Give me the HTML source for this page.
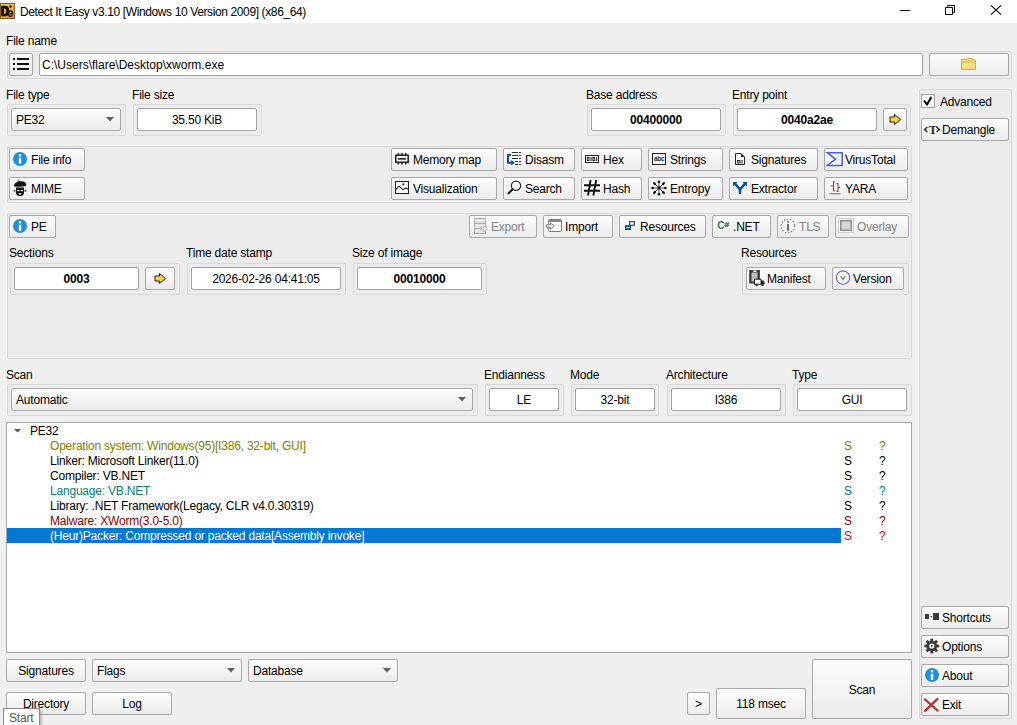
<!DOCTYPE html><html><head><meta charset="utf-8"><style>
*{margin:0;padding:0}
html,body{width:1017px;height:725px;overflow:hidden}
body{position:relative;background:#f0f0f0;font-family:"Liberation Sans",sans-serif;font-size:12px;letter-spacing:-0.2px;color:#000}
.a{position:absolute;box-sizing:border-box}
.t{line-height:14px;white-space:nowrap}
.fr{border:1px solid #d9d9d9;background:#ececec;border-radius:2px}
.btn{border:1px solid #a8a8a8;border-radius:2px;background:linear-gradient(#fdfdfd,#ececec)}
.inp{border:1px solid #a3a3a3;border-radius:2px;background:#fff}
#ic{position:absolute;left:0;top:0;pointer-events:none}
</style></head><body>
<div class="a " style="left:0px;top:0px;width:1017px;height:23px;background:#fff"></div>
<div class="a t" style="left:20px;top:5px;letter-spacing:-0.38px">Detect It Easy v3.10 [Windows 10 Version 2009] (x86_64)</div>
<div class="a t" style="left:6px;top:34px;">File name</div>
<div class="a fr" style="left:7px;top:51px;width:1005px;height:28px;"></div>
<div class="a btn" style="left:9px;top:53px;width:24px;height:23px;"></div>
<div class="a inp" style="left:39px;top:53px;width:884px;height:23px;"></div>
<div class="a t" style="left:42px;top:58px;letter-spacing:0px;">C:\Users\flare\Desktop\xworm.exe</div>
<style>.fn{letter-spacing:0px}</style>
<div class="a btn" style="left:929px;top:53px;width:80px;height:23px;"></div>
<div class="a t" style="left:6px;top:88px;">File type</div>
<div class="a t" style="left:132px;top:88px;">File size</div>
<div class="a t" style="left:586px;top:88px;">Base address</div>
<div class="a t" style="left:732px;top:88px;">Entry point</div>
<div class="a fr" style="left:7px;top:104px;width:119px;height:32px;"></div>
<div class="a btn" style="left:11px;top:108px;width:110px;height:23px;"></div>
<div class="a t" style="left:16px;top:113px;">PE32</div>
<div class="a fr" style="left:133px;top:104px;width:129px;height:32px;"></div>
<div class="a inp" style="left:137px;top:108px;width:120px;height:23px;"></div>
<div class="a t" style="left:137px;width:120px;top:113px;text-align:center;">35.50 KiB</div>
<div class="a fr" style="left:587px;top:104px;width:139px;height:32px;"></div>
<div class="a inp" style="left:591px;top:108px;width:130px;height:23px;"></div>
<div class="a t" style="left:591px;width:130px;top:113px;text-align:center;font-weight:bold;">00400000</div>
<div class="a fr" style="left:733px;top:104px;width:178px;height:32px;"></div>
<div class="a inp" style="left:737px;top:108px;width:140px;height:23px;"></div>
<div class="a t" style="left:737px;width:140px;top:113px;text-align:center;font-weight:bold;">0040a2ae</div>
<div class="a btn" style="left:883px;top:108px;width:24px;height:23px;"></div>
<div class="a fr" style="left:919px;top:89px;width:93px;height:630px;"></div>
<div class="a " style="left:921px;top:94px;width:14px;height:14px;background:#fff;border:1px solid #a0a0a0"></div>
<div class="a t" style="left:940px;top:95px;">Advanced</div>
<div class="a btn" style="left:921px;top:118px;width:88px;height:23px;"></div>
<div class="a t" style="left:942px;top:123px;">Demangle</div>
<div class="a fr" style="left:7px;top:146px;width:905px;height:57px;"></div>
<div class="a btn" style="left:9px;top:148px;width:76px;height:23px;"></div>
<div class="a t" style="left:31px;top:153px;">File info</div>
<div class="a btn" style="left:9px;top:177px;width:76px;height:23px;"></div>
<div class="a t" style="left:31px;top:182px;">MIME</div>
<div class="a btn" style="left:391px;top:148px;width:106px;height:23px;"></div>
<div class="a t" style="left:413px;top:153px;">Memory map</div>
<div class="a btn" style="left:503px;top:148px;width:72px;height:23px;"></div>
<div class="a t" style="left:525px;top:153px;">Disasm</div>
<div class="a btn" style="left:581px;top:148px;width:61px;height:23px;"></div>
<div class="a t" style="left:603px;top:153px;">Hex</div>
<div class="a btn" style="left:648px;top:148px;width:75px;height:23px;"></div>
<div class="a t" style="left:670px;top:153px;">Strings</div>
<div class="a btn" style="left:729px;top:148px;width:89px;height:23px;"></div>
<div class="a t" style="left:751px;top:153px;">Signatures</div>
<div class="a btn" style="left:824px;top:148px;width:84px;height:23px;"></div>
<div class="a t" style="left:845px;top:153px;">VirusTotal</div>
<div class="a btn" style="left:391px;top:177px;width:106px;height:23px;"></div>
<div class="a t" style="left:413px;top:182px;">Visualization</div>
<div class="a btn" style="left:503px;top:177px;width:72px;height:23px;"></div>
<div class="a t" style="left:525px;top:182px;">Search</div>
<div class="a btn" style="left:581px;top:177px;width:61px;height:23px;"></div>
<div class="a t" style="left:603px;top:182px;">Hash</div>
<div class="a btn" style="left:648px;top:177px;width:75px;height:23px;"></div>
<div class="a t" style="left:670px;top:182px;">Entropy</div>
<div class="a btn" style="left:729px;top:177px;width:89px;height:23px;"></div>
<div class="a t" style="left:751px;top:182px;">Extractor</div>
<div class="a btn" style="left:824px;top:177px;width:84px;height:23px;"></div>
<div class="a t" style="left:845px;top:182px;">YARA</div>
<div class="a fr" style="left:7px;top:213px;width:905px;height:146px;"></div>
<div class="a btn" style="left:9px;top:215px;width:47px;height:23px;"></div>
<div class="a t" style="left:31px;top:220px;">PE</div>
<div class="a btn" style="left:469px;top:215px;width:68px;height:23px;"></div>
<div class="a t" style="left:491px;top:220px;color:#838383">Export</div>
<div class="a btn" style="left:543px;top:215px;width:70px;height:23px;"></div>
<div class="a t" style="left:565px;top:220px;">Import</div>
<div class="a btn" style="left:619px;top:215px;width:87px;height:23px;"></div>
<div class="a t" style="left:640px;top:220px;">Resources</div>
<div class="a btn" style="left:712px;top:215px;width:59px;height:23px;"></div>
<div class="a t" style="left:733px;top:220px;">.NET</div>
<div class="a btn" style="left:777px;top:215px;width:52px;height:23px;"></div>
<div class="a t" style="left:799px;top:220px;color:#838383">TLS</div>
<div class="a btn" style="left:835px;top:215px;width:74px;height:23px;"></div>
<div class="a t" style="left:857px;top:220px;color:#838383">Overlay</div>
<div class="a t" style="left:9px;top:246px;">Sections</div>
<div class="a t" style="left:186px;top:246px;">Time date stamp</div>
<div class="a t" style="left:352px;top:246px;">Size of image</div>
<div class="a t" style="left:741px;top:246px;">Resources</div>
<div class="a fr" style="left:10px;top:263px;width:170px;height:32px;"></div>
<div class="a inp" style="left:14px;top:267px;width:125px;height:23px;"></div>
<div class="a t" style="left:14px;width:125px;top:272px;text-align:center;font-weight:bold;">0003</div>
<div class="a btn" style="left:145px;top:267px;width:30px;height:23px;"></div>
<div class="a fr" style="left:187px;top:263px;width:159px;height:32px;"></div>
<div class="a inp" style="left:191px;top:267px;width:150px;height:23px;"></div>
<div class="a t" style="left:191px;width:150px;top:272px;text-align:center;">2026-02-26 04:41:05</div>
<div class="a fr" style="left:353px;top:263px;width:134px;height:32px;"></div>
<div class="a inp" style="left:357px;top:267px;width:125px;height:23px;"></div>
<div class="a t" style="left:357px;width:125px;top:272px;text-align:center;font-weight:bold;">00010000</div>
<div class="a fr" style="left:742px;top:263px;width:167px;height:32px;"></div>
<div class="a btn" style="left:746px;top:267px;width:80px;height:23px;"></div>
<div class="a t" style="left:767px;top:272px;">Manifest</div>
<div class="a btn" style="left:832px;top:267px;width:72px;height:23px;"></div>
<div class="a t" style="left:853px;top:272px;">Version</div>
<div class="a t" style="left:6px;top:368px;">Scan</div>
<div class="a t" style="left:484px;top:368px;">Endianness</div>
<div class="a t" style="left:570px;top:368px;">Mode</div>
<div class="a t" style="left:666px;top:368px;">Architecture</div>
<div class="a t" style="left:792px;top:368px;">Type</div>
<div class="a fr" style="left:7px;top:384px;width:471px;height:32px;"></div>
<div class="a btn" style="left:11px;top:388px;width:462px;height:23px;"></div>
<div class="a t" style="left:16px;top:393px;">Automatic</div>
<div class="a fr" style="left:485px;top:384px;width:79px;height:32px;"></div>
<div class="a inp" style="left:489px;top:388px;width:70px;height:23px;"></div>
<div class="a t" style="left:489px;width:70px;top:393px;text-align:center;">LE</div>
<div class="a fr" style="left:571px;top:384px;width:88px;height:32px;"></div>
<div class="a inp" style="left:575px;top:388px;width:80px;height:23px;"></div>
<div class="a t" style="left:575px;width:80px;top:393px;text-align:center;">32-bit</div>
<div class="a fr" style="left:667px;top:384px;width:119px;height:32px;"></div>
<div class="a inp" style="left:671px;top:388px;width:110px;height:23px;"></div>
<div class="a t" style="left:671px;width:110px;top:393px;text-align:center;">I386</div>
<div class="a fr" style="left:793px;top:384px;width:119px;height:32px;"></div>
<div class="a inp" style="left:797px;top:388px;width:110px;height:23px;"></div>
<div class="a t" style="left:797px;width:110px;top:393px;text-align:center;">GUI</div>
<div class="a " style="left:6px;top:422px;width:906px;height:231px;background:#fff;border:1px solid #a8a8a8"></div>
<div class="a t" style="left:30px;top:424px;">PE32</div>
<div class="a t" style="left:50px;top:439px;color:#808000">Operation system: Windows(95)[I386, 32-bit, GUI]</div>
<div class="a t" style="left:844px;top:439px;color:#808000">S</div>
<div class="a t" style="left:879px;top:439px;color:#808000">?</div>
<div class="a t" style="left:50px;top:454px;color:#000">Linker: Microsoft Linker(11.0)</div>
<div class="a t" style="left:844px;top:454px;color:#000">S</div>
<div class="a t" style="left:879px;top:454px;color:#000">?</div>
<div class="a t" style="left:50px;top:469px;color:#000">Compiler: VB.NET</div>
<div class="a t" style="left:844px;top:469px;color:#000">S</div>
<div class="a t" style="left:879px;top:469px;color:#000">?</div>
<div class="a t" style="left:50px;top:484px;color:#008080">Language: VB.NET</div>
<div class="a t" style="left:844px;top:484px;color:#008080">S</div>
<div class="a t" style="left:879px;top:484px;color:#008080">?</div>
<div class="a t" style="left:50px;top:499px;color:#000">Library: .NET Framework(Legacy, CLR v4.0.30319)</div>
<div class="a t" style="left:844px;top:499px;color:#000">S</div>
<div class="a t" style="left:879px;top:499px;color:#000">?</div>
<div class="a t" style="left:50px;top:514px;color:#8b0000">Malware: XWorm(3.0-5.0)</div>
<div class="a t" style="left:844px;top:514px;color:#8b0000">S</div>
<div class="a t" style="left:879px;top:514px;color:#8b0000">?</div>
<div class="a " style="left:7px;top:528px;width:834px;height:15px;background:#0078d7"></div>
<div class="a t" style="left:50px;top:529px;color:#fff">(Heur)Packer: Compressed or packed data[Assembly invoke]</div>
<div class="a t" style="left:844px;top:529px;color:#e00000">S</div>
<div class="a t" style="left:879px;top:529px;color:#e00000">?</div>
<div class="a btn" style="left:6px;top:659px;width:80px;height:23px;"></div>
<div class="a t" style="left:6px;width:80px;top:664px;text-align:center;">Signatures</div>
<div class="a btn" style="left:92px;top:659px;width:150px;height:23px;"></div>
<div class="a t" style="left:97px;top:664px;">Flags</div>
<div class="a btn" style="left:248px;top:659px;width:150px;height:23px;"></div>
<div class="a t" style="left:253px;top:664px;">Database</div>
<div class="a btn" style="left:6px;top:692px;width:80px;height:23px;"></div>
<div class="a t" style="left:6px;width:80px;top:697px;text-align:center;">Directory</div>
<div class="a btn" style="left:92px;top:692px;width:80px;height:23px;"></div>
<div class="a t" style="left:92px;width:80px;top:697px;text-align:center;">Log</div>
<div class="a btn" style="left:687px;top:692px;width:23px;height:23px;"></div>
<div class="a t" style="left:687px;width:23px;top:697px;text-align:center;">&gt;</div>
<div class="a btn" style="left:716px;top:688px;width:90px;height:31px;"></div>
<div class="a t" style="left:716px;width:90px;top:697px;text-align:center;">118 msec</div>
<div class="a btn" style="left:812px;top:659px;width:100px;height:60px;"></div>
<div class="a t" style="left:812px;width:100px;top:683px;text-align:center;">Scan</div>
<div class="a btn" style="left:921px;top:606px;width:88px;height:23px;"></div>
<div class="a t" style="left:942px;top:611px;">Shortcuts</div>
<div class="a btn" style="left:921px;top:635px;width:88px;height:23px;"></div>
<div class="a t" style="left:942px;top:640px;">Options</div>
<div class="a btn" style="left:921px;top:664px;width:88px;height:23px;"></div>
<div class="a t" style="left:942px;top:669px;">About</div>
<div class="a btn" style="left:921px;top:693px;width:88px;height:23px;"></div>
<div class="a t" style="left:942px;top:698px;">Exit</div>
<div class="a " style="left:3px;top:708px;width:37px;height:20px;background:#fff;border:1px solid #8a8a8a;box-shadow:2px 2px 2px rgba(0,0,0,0.2)"></div>
<div class="a t" style="left:9px;top:711px;color:#575757">Start</div>
<svg id="ic" width="1017" height="725" viewBox="0 0 1017 725"><defs><linearGradient id="gold" x1="0" y1="0" x2="0.3" y2="1"><stop offset="0" stop-color="#f6d04a"/><stop offset="1" stop-color="#e8913a"/></linearGradient></defs><rect x="0.5" y="3.5" width="14" height="15" fill="url(#gold)" stroke="#8a5a20"/><path d="M1.2 5.8H5.2Q9.2 5.8 9.2 11Q9.2 16.3 5.2 16.3H1.2Z" fill="#111"/><path d="M4 8.4H5Q6.3 8.4 6.3 11.1Q6.3 13.8 5 13.8H4Z" fill="#e0b040"/><circle cx="10.5" cy="6.5" r="1.2" fill="#111"/><path d="M12.6 14.8Q11.8 16.3 10.5 16.3Q8.4 16.3 8.4 13.6Q8.4 10.9 10.5 10.9Q12.6 10.9 12.6 13.5H9.6" fill="none" stroke="#111" stroke-width="1.3"/><rect x="900" y="10" width="10" height="1" fill="#000"/><path d="M945.5 7.5H952.5V14.5H945.5Z M947.5 7.5V5.5H954.5V12.5H952.5" fill="none" stroke="#000"/><path d="M991 5.3L1001 14.7M1001 5.3L991 14.7" stroke="#000" stroke-width="1.1"/><g fill="#111"><rect x="13" y="58" width="2" height="2"/><rect x="13" y="63" width="2" height="2"/><rect x="13" y="68" width="2" height="2"/><rect x="17" y="58" width="12" height="2"/><rect x="17" y="63" width="12" height="2"/><rect x="17" y="68" width="12" height="2"/></g><path d="M961.5 59.5H966L967.5 58.5H972.5L973.5 60H975.5V69.5H961.5Z" fill="#f2d36e" stroke="#d8b24e"/><path d="M961.5 62.5H975.5" stroke="#e6c45a"/><rect x="963" y="63" width="11" height="5.5" fill="#f7e08a"/><path d="M106 117h8l-4 4.5z" fill="#606060"/><path transform="translate(888.5 113.5)" d="M1.5 3.5H6V1L12 6L6 11V8.5H1.5Z" fill="#f8d43a" stroke="#2a2000" stroke-linejoin="miter"/><path d="M924 100.5L927 104.5L931.5 97" fill="none" stroke="#000" stroke-width="2"/><path d="M927.4 127L924.6 129.5L927.4 132M936.6 127L939.4 129.5L936.6 132" fill="none" stroke="#333" stroke-width="1.5"/><text x="928.4" y="133.8" font-family="Liberation Serif" font-weight="bold" font-size="13" fill="#333">T</text><circle cx="20" cy="159" r="7" fill="#1e90d4"/><rect x="18.8" y="157.7" width="2.4" height="6.3" fill="#fff"/><rect x="18.8" y="154.2" width="2.4" height="2.2" fill="#fff"/><path d="M14 186.2Q13.8 182.3 19.5 181.3Q26.5 181 26.4 184.8Q26.3 186.7 20 186.8Q15 187 14 186.2Z" fill="#111"/><rect x="18" y="180" width="1.2" height="1.5" fill="#111"/><path d="M16 187.5H24V192.5Q24 196 20 196Q16 196 16 192.5Z" fill="#111"/><circle cx="14.6" cy="190.7" r="0.9" fill="#111"/><circle cx="25.4" cy="190.7" r="0.9" fill="#111"/><g fill="#fff"><rect x="17.2" y="189.9" width="2.2" height="1.3"/><rect x="20.8" y="189.9" width="2.2" height="1.3"/><path d="M18.5 193.3H21.5Q21.3 194.8 20 194.8Q18.7 194.8 18.5 193.3Z"/></g><g fill="#222"><path d="M395 154.5H409V163H395Z M396.6 156.1V161.4H407.4V156.1Z" fill-rule="evenodd"/><rect x="398" y="158" width="8" height="1.6"/><rect x="397.5" y="153" width="1.6" height="2"/><rect x="401.2" y="153" width="1.6" height="2"/><rect x="405" y="153" width="1.6" height="2"/><rect x="397.5" y="162.5" width="1.6" height="2"/><rect x="401.2" y="162.5" width="1.6" height="2"/><rect x="405" y="162.5" width="1.6" height="2"/></g><path d="M511 155H508V162.7H512" fill="none" stroke="#0f4c99" stroke-width="2.1"/><path d="M511.3 160L514.8 162.8L511.3 165.6Z" fill="#0f4c99"/><g fill="#333"><rect x="512" y="152" width="6" height="1"/><rect x="512" y="155" width="6" height="1"/><rect x="512" y="158" width="6" height="1"/><rect x="515" y="161" width="3" height="1"/><rect x="515" y="164" width="3" height="1"/><rect x="519" y="152" width="2" height="1"/><rect x="519" y="155" width="2" height="1"/><rect x="519" y="158" width="2" height="1"/><rect x="519" y="161" width="2" height="1"/><rect x="519" y="164" width="2" height="1"/></g><rect x="585.5" y="155.5" width="13" height="7" fill="#fff" stroke="#222"/><g fill="#222"><path d="M586.8 157H589.6V161H586.8Z M587.8 158V160H588.6V158Z" fill-rule="evenodd"/><rect x="590.6" y="157" width="1" height="4"/><path d="M592.4 157H595.2V161H592.4Z M593.4 158V160H594.2V158Z" fill-rule="evenodd"/><rect x="596.2" y="157" width="1" height="4"/></g><rect x="652.5" y="153.5" width="13" height="11" fill="#fff" stroke="#222"/><text x="654" y="161" font-family="Liberation Sans" font-weight="bold" font-size="6.5" letter-spacing="-0.3" fill="#222">abc</text><path d="M735.5 153.5H741L744.5 157V164.5H735.5Z" fill="#fff" stroke="#222"/><path d="M741 153.5V157H744.5Z" fill="#222"/><rect x="737.5" y="160.5" width="2.5" height="2.5" fill="none" stroke="#222"/><rect x="741.5" y="160" width="1" height="3.5" fill="#222"/><path d="M827.3 152.8H842.2V165.4H827.3L835.5 159.1Z" fill="none" stroke="#4a5fd6" stroke-width="1.5" stroke-linejoin="miter"/><rect x="395.5" y="181.5" width="13" height="12" fill="#fff" stroke="#222" stroke-width="1.1"/><path d="M396 189.5L399 186.2L403 189.7L406 188L408.5 189.5" fill="none" stroke="#222" stroke-width="1.1"/><circle cx="403.3" cy="184.4" r="1.1" fill="#333"/><circle cx="516" cy="185.8" r="4.6" fill="none" stroke="#222" stroke-width="1.2"/><path d="M512.6 189.2L508.6 193.2" stroke="#222" stroke-width="2.2" stroke-linecap="round"/><g stroke="#111" stroke-width="1.9"><path d="M590.6 180L588 195.5M596.2 180L593.4 195.5M584 185.3H600M584 190.7H600"/></g><g stroke="#888" stroke-width="1.6"><path d="M659 181V195M652 188H666"/></g><g stroke="#111" stroke-width="0.9"><path d="M654 183L664 193M664 183L654 193"/></g><circle cx="659" cy="188" r="1.4" fill="#111"/><g fill="#111"><circle cx="659" cy="181.8" r="1.3"/><circle cx="659" cy="194.2" r="1.3"/><circle cx="652.6" cy="188" r="1.3"/><circle cx="665.4" cy="188" r="1.3"/><ellipse cx="654.6" cy="183.6" rx="1.9" ry="1.1" transform="rotate(45 654.6 183.6)"/><ellipse cx="663.4" cy="183.6" rx="1.9" ry="1.1" transform="rotate(-45 663.4 183.6)"/><ellipse cx="654.6" cy="192.4" rx="1.9" ry="1.1" transform="rotate(-45 654.6 192.4)"/><ellipse cx="663.4" cy="192.4" rx="1.9" ry="1.1" transform="rotate(45 663.4 192.4)"/></g><path d="M734.5 183L740 189.5L745.5 183M740 189V194" fill="none" stroke="#0e4f9e" stroke-width="2.6"/><path d="M733 182H737.5L733 186.5Z M747 182H742.5L747 186.5Z" fill="#0e4f9e"/><path d="M835 181.8H833.5V190.8H835M836.5 183.5H838V191.5H836.5M830.5 186H833.5M838 187.5H840" fill="none" stroke="#b83232" stroke-width="1.1"/><path d="M829.5 193.8H840.5" stroke="#444" stroke-width="0.8"/><circle cx="20" cy="226" r="7" fill="#1e90d4"/><rect x="18.8" y="224.7" width="2.4" height="6.3" fill="#fff"/><rect x="18.8" y="221.2" width="2.4" height="2.2" fill="#fff"/><g stroke="#b0b0b0"><rect x="474.5" y="218.5" width="11" height="15" fill="#e2e2e2"/><path d="M474.5 223.5H485.5M474.5 228.5H485.5"/><path d="M476.5 220.5H483.5M476.5 225.5H483.5M476.5 230.5H483.5" stroke="#f4f4f4"/><path d="M480.5 227.5H484V225.7L487.5 228.7L484 231.7V229.9H480.5Z" fill="#f4f4f4"/></g><rect x="548.5" y="219.5" width="13" height="12" rx="1" fill="#fafafa" stroke="#7a7a7a"/><rect x="549" y="220" width="12" height="2" fill="#8a8a8a"/><path d="M546.5 224.8H550.5V222.8L553.8 226L550.5 229.2V227.2H546.5Z" fill="#fff" stroke="#7a7a7a"/><rect x="625" y="225.2" width="6" height="4.8" fill="#0f4a8a"/><rect x="626.3" y="227" width="3.4" height="1.2" fill="#cfe4f5"/><rect x="629.6" y="221.6" width="4.8" height="3.6" fill="none" stroke="#0f4a8a" stroke-width="1.1"/><text x="717.2" y="229.2" font-family="Liberation Sans" font-weight="bold" font-size="10" fill="#3a7a3a">C</text><path d="M726.3 222L725.5 227M728.3 222L727.5 227M724.6 223.7H729.2M724.4 225.5H729" stroke="#3a7a3a" stroke-width="1.1"/><circle cx="788" cy="226" r="6.8" fill="none" stroke="#555" stroke-width="1.1" stroke-dasharray="1.1 2"/><rect x="787" y="224" width="2" height="6.8" fill="#707070"/><rect x="787" y="221" width="2" height="1.6" fill="#707070"/><rect x="838.5" y="218.5" width="15" height="14" fill="#f6f6f6" stroke="#cccccc"/><rect x="840.7" y="220.7" width="10.6" height="9.6" fill="#d6d6d6" stroke="#8a8a8a" stroke-width="1.4"/><path transform="translate(153.5 272.5)" d="M1.5 3.5H6V1L12 6L6 11V8.5H1.5Z" fill="#f8d43a" stroke="#2a2000" stroke-linejoin="miter"/><rect x="749.2" y="270" width="10.7" height="13.5" fill="#3a3a3a"/><rect x="751.5" y="272.5" width="6" height="9" fill="#bdbdbd"/><rect x="753" y="270.5" width="3.5" height="1.5" fill="#fff"/><rect x="754.5" y="279.2" width="6.5" height="5" fill="#fff" stroke="#222"/><path d="M761 280.5H763.5L764.5 282V284.2H761Z" fill="#222"/><circle cx="756.5" cy="285" r="1.2" fill="#222"/><circle cx="762.5" cy="285" r="1.2" fill="#222"/><circle cx="843" cy="277.6" r="6.7" fill="none" stroke="#7a5ac8" stroke-width="1.1"/><path d="M840.8 276.2L843 279.6L845.2 276.2" fill="none" stroke="#3aa050" stroke-width="1.2"/><path d="M458 397h8l-4 4.5z" fill="#606060"/><path d="M14 429H21L17.5 432.5Z" fill="#555"/><path d="M227 668h8l-4 4.5z" fill="#606060"/><path d="M383 668h8l-4 4.5z" fill="#606060"/><g fill="#3a3a3a"><rect x="925" y="614" width="4" height="5"/><rect x="930.5" y="616" width="1.5" height="1"/><rect x="933" y="613" width="6" height="7"/></g><g fill="#3a3a3a"><rect x="930.4" y="638.6" width="2.8" height="3.5" transform="rotate(0 931.8 646)"/><rect x="930.4" y="638.6" width="2.8" height="3.5" transform="rotate(45 931.8 646)"/><rect x="930.4" y="638.6" width="2.8" height="3.5" transform="rotate(90 931.8 646)"/><rect x="930.4" y="638.6" width="2.8" height="3.5" transform="rotate(135 931.8 646)"/><rect x="930.4" y="638.6" width="2.8" height="3.5" transform="rotate(180 931.8 646)"/><rect x="930.4" y="638.6" width="2.8" height="3.5" transform="rotate(225 931.8 646)"/><rect x="930.4" y="638.6" width="2.8" height="3.5" transform="rotate(270 931.8 646)"/><rect x="930.4" y="638.6" width="2.8" height="3.5" transform="rotate(315 931.8 646)"/><circle cx="931.8" cy="646" r="5.3"/></g><circle cx="931.8" cy="646" r="2.6" fill="#fff"/><circle cx="931.8" cy="646" r="1" fill="#3a3a3a"/><circle cx="932" cy="675" r="7" fill="#1e90d4"/><rect x="930.8" y="673.7" width="2.4" height="6.3" fill="#fff"/><rect x="930.8" y="670.2" width="2.4" height="2.2" fill="#fff"/><path d="M925 699.5L937.5 710.5M937.5 699L925 710.8" stroke="#c0282a" stroke-width="2.3" stroke-linecap="round"/></svg>
</body></html>
